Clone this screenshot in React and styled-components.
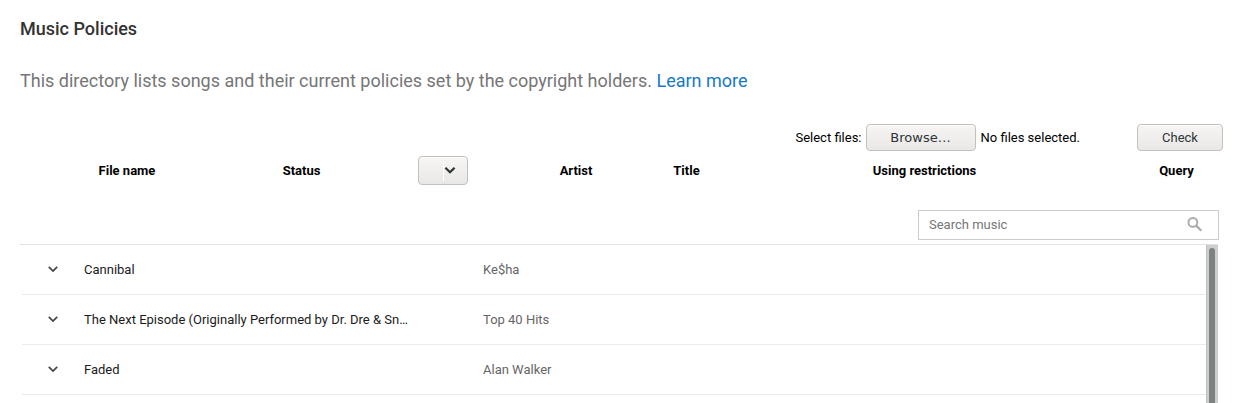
import React, { useRef, useState } from "react";
import styled, { createGlobalStyle, css } from "styled-components";

const GlobalStyle = createGlobalStyle`
  *, *::before, *::after { box-sizing: border-box; }
  body {
    margin: 0;
    background: #fff;
    color: #000;
    font: 13px/20px Roboto, "Liberation Sans", sans-serif;
  }
`;

const Page = styled.main`
  display: flex;
  flex-direction: column;
  min-height: 100vh;
  padding-left: 20px;
`;

const Heading = styled.h1`
  margin: 16px 0 0;
  color: #333;
  font-size: 18px;
  font-weight: 500;
  line-height: 26px;
`;

const Intro = styled.p`
  margin: 26px 0 0;
  color: #767676;
  font-size: 18px;
  line-height: 26px;
`;

const Link = styled.a`
  color: #167ac6;
  text-decoration: none;
`;

const raised = css`
  border: 1px solid #c5c0bb;
  border-radius: 4px;
  background: linear-gradient(#f6f5f4, #e9e8e6);
  box-shadow: inset 0 1px #fff;
  color: #2e3436;
`;

const Button = styled.button`
  ${raised}
  width: ${(p) => p.$width}px;
  height: 27px;
  padding: 0;
  font-family: ${(p) => (p.$system ? '"DejaVu Sans", sans-serif' : "inherit")};
  font-size: 13px;
`;

const UploadBar = styled.form`
  display: flex;
  align-items: center;
  justify-content: flex-end;
  margin-top: 30px;
  padding-right: 11px;
`;

const BrowseButton = styled(Button)`
  margin: 0 5px 0 4px;
`;

const FileStatus = styled.output`
  margin-right: 57px;
`;

const PolicyTable = styled.table`
  width: 100%;
  margin-top: 4px;
  padding-right: 10px;
  table-layout: fixed;
  border-collapse: separate;
  border-spacing: 0;
`;

const HeaderCell = styled.th`
  width: ${(p) => (p.$width ? `${p.$width}px` : "auto")};
  height: 31px;
  padding: 0 ${(p) => p.$padEnd || 0}px 0 0;
  font-weight: 700;
  text-align: center;
  vertical-align: middle;
`;

const SelectBox = styled.div`
  position: relative;
  width: 50px;
  height: 29px;
  margin: 0 auto;

  svg {
    position: absolute;
    top: 5px;
    right: 11px;
    pointer-events: none;
  }
`;

const Select = styled.select`
  ${raised}
  display: block;
  width: 100%;
  height: 100%;
  appearance: none;
`;

const SearchForm = styled.form`
  display: flex;
  align-items: center;
  align-self: flex-end;
  width: 301px;
  height: 30px;
  margin: 24px 15px 4px 0;
  padding: 0 13px 0 10px;
  border: 1px solid #ccc;
`;

const SearchInput = styled.input`
  flex: 1;
  min-width: 0;
  padding: 0;
  border: 0;
  outline: 0;
  background: none;
  font: inherit;

  &::placeholder { color: #767676; opacity: 1; }
`;

const IconButton = styled.button`
  display: flex;
  padding: 0;
  border: 0;
  background: none;
  color: ${(p) => p.$color};
`;

const ListFrame = styled.section`
  display: flex;
  flex: 1;
  margin-right: 16px;
  border-top: 1px solid #e2e2e2;
`;

const SongArea = styled.div`
  flex: 1;
  min-width: 0;
  padding-left: 2px;
`;

const SongTable = styled.table`
  width: 100%;
  table-layout: fixed;
  border-collapse: separate;
  border-spacing: 0;
`;

const SongCell = styled.td`
  width: ${(p) => (p.$width ? `${p.$width}px` : "auto")};
  height: 50px;
  padding: ${(p) => p.$padding || "0"};
  border-bottom: 1px solid #ebebeb;
  color: ${(p) => (p.$strong ? "#1b1b1b" : "#666")};
  overflow: hidden;
  text-overflow: ellipsis;
  white-space: nowrap;
`;

const ScrollTrack = styled.div`
  display: flex;
  width: 12px;
  padding: 3px 3px 0 2px;
  border-left: 1px solid #c2bfb8;
  background: #cecece;
`;

const ScrollThumb = styled.div`
  flex: 1;
  border-radius: 3px 3px 0 0;
  background: #7e8282;
`;

const columns = [
  { name: "File name", width: 214 },
  { name: "Status", width: 135 },
  { name: "", width: 148 },
  { name: "Artist", width: 118 },
  { name: "Title", width: 103 },
  { name: "Using restrictions", padEnd: 18 },
  { name: "Query", width: 95 },
];

const songs = [
  { title: "Cannibal", artist: "Ke$ha" },
  { title: "The Next Episode (Originally Performed by Dr. Dre & Sn…", artist: "Top 40 Hits" },
  { title: "Faded", artist: "Alan Walker" },
];

function RowChevron() {
  return (
    <svg width="18" height="18" viewBox="0 0 18 18" fill="none" stroke="currentColor" strokeWidth="1.7" aria-hidden="true">
      <path d="M4.8 5.9 9 10.1l4.2-4.2" />
    </svg>
  );
}

function SelectArrow() {
  return (
    <svg width="14" height="20" viewBox="0 0 14 20" fill="none" aria-hidden="true">
      <path d="M.5 0v20" stroke="#fff" />
      <path d="M2.4 6.7 7 11.3 11.6 6.7" stroke="#2e3436" strokeWidth="2.2" />
    </svg>
  );
}

function SearchIcon() {
  return (
    <svg width="20" height="20" viewBox="0 0 20 20" fill="none" stroke="currentColor" strokeWidth="1.9" aria-hidden="true">
      <circle cx="7.9" cy="7.4" r="4.4" />
      <path d="m11.1 10.6 5.2 5.2" strokeWidth="2.2" />
    </svg>
  );
}

export default function App() {
  const picker = useRef(null);
  const [count, setCount] = useState(0);

  return (
    <Page>
      <GlobalStyle />
      <Heading>Music Policies</Heading>
      <Intro>
        This directory lists songs and their current policies set by the copyright holders.{" "}
        <Link href="#learn">Learn more</Link>
      </Intro>

      <UploadBar onSubmit={(e) => e.preventDefault()}>
        <label htmlFor="files">Select files:</label>
        <input id="files" ref={picker} type="file" multiple hidden onChange={(e) => setCount(e.target.files.length)} />
        <BrowseButton type="button" $width={110} $system onClick={() => picker.current.click()}>
          Browse…
        </BrowseButton>
        <FileStatus htmlFor="files">{count ? `${count} files selected.` : "No files selected."}</FileStatus>
        <Button type="submit" $width={86}>Check</Button>
      </UploadBar>

      <PolicyTable>
        <thead>
          <tr>
            {columns.map((c) => (
              <HeaderCell key={c.name} scope="col" $width={c.width} $padEnd={c.padEnd}>
                {c.name || (
                  <SelectBox>
                    <Select aria-label="Status filter"><option value="" /></Select>
                    <SelectArrow />
                  </SelectBox>
                )}
              </HeaderCell>
            ))}
          </tr>
        </thead>
      </PolicyTable>

      <SearchForm role="search" onSubmit={(e) => e.preventDefault()}>
        <SearchInput type="text" placeholder="Search music" aria-label="Search music" />
        <IconButton type="submit" aria-label="Search" $color="#aaa"><SearchIcon /></IconButton>
      </SearchForm>

      <ListFrame>
        <SongArea>
          <SongTable>
            <tbody>
              {songs.map((s) => (
                <tr key={s.title}>
                  <SongCell $width={62} $padding="0 0 0 22px">
                    <IconButton type="button" aria-label={`Expand ${s.title}`} $color="#444"><RowChevron /></IconButton>
                  </SongCell>
                  <SongCell $width={399} $strong>{s.title}</SongCell>
                  <SongCell>{s.artist}</SongCell>
                </tr>
              ))}
            </tbody>
          </SongTable>
        </SongArea>
        <ScrollTrack><ScrollThumb /></ScrollTrack>
      </ListFrame>
    </Page>
  );
}
